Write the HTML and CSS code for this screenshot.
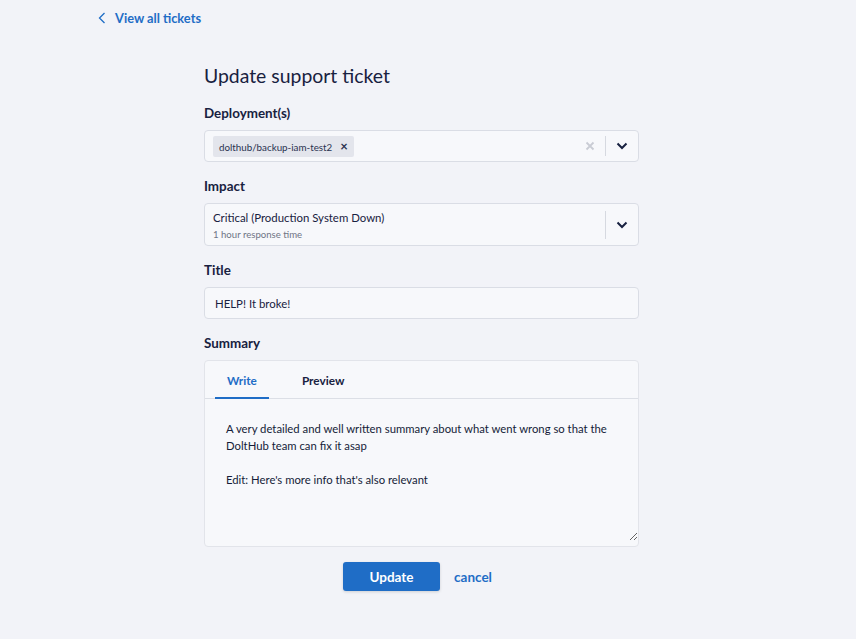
FILE: index.html
```html
<!DOCTYPE html>
<html lang="en">
<head>
  <meta charset="UTF-8">
  <meta name="viewport" content="width=device-width, initial-scale=1.0">
  <title>Update support ticket</title>
  <link rel="stylesheet" href="styles.css">
</head>
<body>
  <div class="page">
    <a class="back-link" href="#">
      <svg width="8" height="12" viewBox="0 0 8 12"><path d="M6.5 1 L1.5 6 L6.5 11" fill="none" stroke="#1f6dc6" stroke-width="1.3"/></svg>
      View all tickets
    </a>

    <form class="ticket-form">
      <h1>Update support ticket</h1>

      <div class="field">
        <label>Deployment(s)</label>
        <div class="select">
          <div class="select-value">
            <span class="tag">dolthub/backup-iam-test2 <b>&times;</b></span>
          </div>
          <span class="clear"><svg width="10" height="10" viewBox="0 0 10 10"><path d="M1.5 1.5 L8.5 8.5 M8.5 1.5 L1.5 8.5" stroke="#c9ccd4" stroke-width="1.8"/></svg></span>
          <span class="sep"></span>
          <span class="chevron"><svg width="12" height="8" viewBox="0 0 12 8"><path d="M1.5 1.5 L6 6 L10.5 1.5" fill="none" stroke="#182140" stroke-width="2"/></svg></span>
        </div>
      </div>

      <div class="field">
        <label>Impact</label>
        <div class="select select-tall">
          <div class="select-value">
            <div class="option-title">Critical (Production System Down)</div>
            <div class="option-sub">1 hour response time</div>
          </div>
          <span class="sep"></span>
          <span class="chevron"><svg width="12" height="8" viewBox="0 0 12 8"><path d="M1.5 1.5 L6 6 L10.5 1.5" fill="none" stroke="#182140" stroke-width="2"/></svg></span>
        </div>
      </div>

      <div class="field">
        <label>Title</label>
        <input class="text-input" type="text" value="HELP! It broke!">
      </div>

      <div class="field">
        <label>Summary</label>
        <div class="editor">
          <div class="tabs">
            <span class="tab active">Write</span>
            <span class="tab">Preview</span>
          </div>
          <textarea class="summary">A very detailed and well written summary about what went wrong so that the DoltHub team can fix it asap

Edit: Here's more info that's also relevant</textarea>
        </div>
      </div>

      <div class="actions">
        <button type="button" class="btn-primary">Update</button>
        <a class="cancel" href="#">cancel</a>
      </div>
    </form>
  </div>
</body>
</html>
```

FILE: styles.css
```css
* { box-sizing: border-box; margin: 0; padding: 0; }
body {
  background: #f2f3f8;
  font-family: 'Lato', 'Open Sans', sans-serif;
  color: #182140;
}
.page {
  padding: 8px 0 40px 98px;
}
.back-link {
  display: inline-flex;
  align-items: center;
  gap: 9px;
  color: #1f6dc6;
  text-decoration: none;
  font-weight: 700;
  font-size: 12.8px;
}
.ticket-form {
  width: 435px;
  margin: 37px 0 0 106px;
}
h1 {
  font-size: 19.4px;
  font-weight: 400;
  margin-bottom: 18px;
}
.field {
  margin-bottom: 16px;
}
.field label {
  display: block;
  font-weight: 700;
  font-size: 13.4px;
  margin-bottom: 9px;
}
.select {
  display: flex;
  align-items: center;
  height: 32px;
  background: #f7f8fb;
  border: 1px solid #dadde5;
  border-radius: 4px;
  padding: 0 8px 0 8px;
}
.select-tall {
  height: 43px;
}
.select-value {
  flex: 1;
}
.tag {
  display: inline-flex;
  align-items: center;
  gap: 8px;
  background: #e3e5ec;
  border-radius: 2px;
  font-size: 9.8px;
  padding: 4px 6px;
  color: #2a3350;
}
.tag b {
  font-size: 13px;
  line-height: 1;
}
.clear {
  display: flex;
  margin-right: 10px;
}
.sep {
  width: 1px;
  height: 20px;
  background: #d6d9e0;
}
.select-tall .sep {
  height: 28px;
}
.chevron {
  display: flex;
  padding: 0 2px 0 10px;
}
.option-title {
  font-size: 11.4px;
  line-height: 16px;
}
.option-sub {
  font-size: 9.6px;
  color: #6f7585;
  margin-top: 3px;
}
.text-input {
  display: block;
  width: 100%;
  height: 32px;
  background: #f7f8fb;
  border: 1px solid #dadde5;
  border-radius: 4px;
  padding: 0 10px;
  font-family: inherit;
  font-size: 11.4px;
  color: #182140;
}
.editor {
  background: #f7f8fb;
  border: 1px solid #e2e4ea;
  border-radius: 4px;
  padding-bottom: 5px;
}
.tabs {
  display: flex;
  gap: 33px;
  padding: 0 10px;
  border-bottom: 1px solid #dcdfe6;
  height: 38px;
}
.tab {
  font-weight: 700;
  font-size: 11.8px;
  padding: 3px 12px 0;
  display: flex;
  align-items: center;
  border-bottom: 2px solid transparent;
  margin-bottom: -1px;
}
.tab.active {
  color: #1f6dc6;
  border-bottom-color: #1f6dc6;
}
.tab + .tab {
  padding: 3px 0 0;
}
.summary {
  display: block;
  width: 100%;
  height: 142px;
  border: none;
  background: #f7f8fb;
  resize: vertical;
  padding: 21px 16px 21px 21px;
  font-family: inherit;
  font-size: 11.3px;
  line-height: 17px;
  color: #141c38;
}
.actions {
  display: flex;
  justify-content: center;
  align-items: center;
  gap: 14px;
  margin-top: -1px;
  padding-right: 8px;
}
.btn-primary {
  width: 97px;
  height: 29px;
  background: #1f6dc6;
  color: #fff;
  border: none;
  border-radius: 3px;
  font-family: inherit;
  font-weight: 700;
  font-size: 13.5px;
  box-shadow: 0 1px 3px rgba(0, 0, 0, 0.15);
}
.cancel {
  color: #1f6dc6;
  font-weight: 700;
  font-size: 13.5px;
  text-decoration: none;
}
```
